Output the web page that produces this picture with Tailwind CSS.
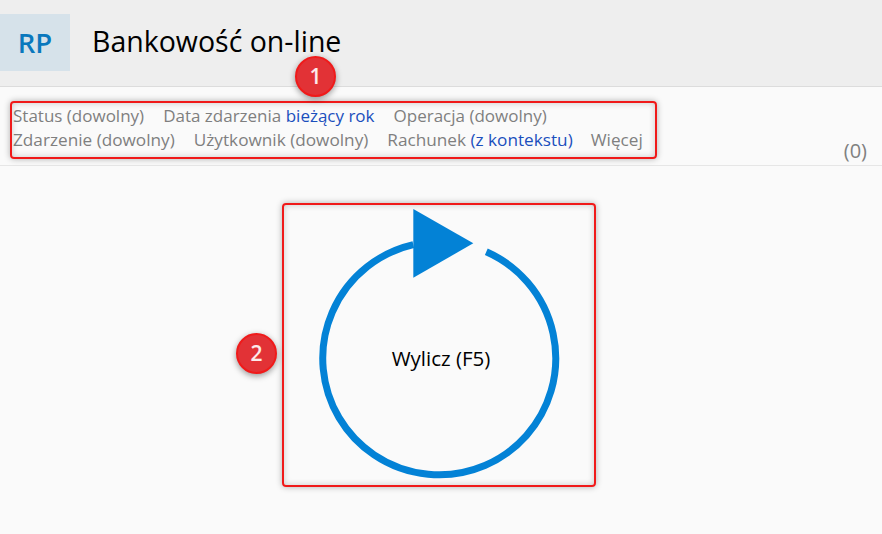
<!DOCTYPE html>
<html lang="pl">
<head>
<meta charset="utf-8">
<script src="https://cdn.jsdelivr.net/npm/@tailwindcss/browser@4"></script>
</head>
<body class="w-[882px] h-[534px] overflow-hidden bg-[#fafafa] font-['Open_Sans','Noto_Sans',sans-serif] relative">
  <header class="h-[87px] bg-[#eeeeee] border-b border-[#dcdcdc] pt-[14px] flex items-start">
    <div class="w-[70px] h-[57px] bg-[#d6e2ea] flex items-center justify-center text-[#0a78bd] text-[27.5px] font-semibold">RP</div>
    <h1 class="ml-[22px] h-[54px] flex items-center text-[28.5px] text-black">Bankowość on-line</h1>
  </header>
  <section class="h-[79px] border-b border-[#e6e6e6] relative pl-[13px] pt-[17px] leading-[24px] text-[#7f7f7f]">
    <div class="flex gap-[19px] text-[17px]">
      <span>Status (dowolny)</span>
      <span>Data zdarzenia <span class="text-[#1b4fbd]">bieżący rok</span></span>
      <span>Operacja (dowolny)</span>
    </div>
    <div class="flex gap-[19px] text-[17.2px]">
      <span>Zdarzenie (dowolny)</span>
      <span>Użytkownik (dowolny)</span>
      <span>Rachunek <span class="text-[#1b4fbd]">(z kontekstu)</span></span>
      <span class="-ml-[1px]">Więcej</span>
    </div>
    <span class="absolute right-[15px] bottom-[2px] text-[20px] text-[#808080]">(0)</span>
  </section>
  <main class="flex justify-center pr-[4px] pt-[38px]">
    <button class="relative w-[312px] h-[282px] flex items-center justify-center text-[20.5px] text-black">
      <svg class="absolute left-0 top-0" width="312" height="282" viewBox="283 204 312 282" fill="none">
        <path d="M486.3 251.7A116.5 116.5 0 1 1 413.3 244.7" stroke="#0382d6" stroke-width="7"/>
        <path d="M413.3 209L473.3 243.3L413.3 277.7Z" fill="#0382d6"/>
      </svg>
      <span class="relative mt-[26px] mr-[-4px]">Wylicz (F5)</span>
    </button>
  </main>
  <div class="absolute left-[10px] top-[101px] w-[647px] h-[58px] border-2 border-[#f01a1a] rounded-[4px] shadow-[0_0_6px_rgba(0,0,0,0.3),inset_0_0_6px_rgba(0,0,0,0.2)]"></div>
  <div class="absolute left-[282px] top-[203px] w-[314px] h-[284px] border-2 border-[#f01a1a] rounded-[4px] shadow-[0_0_6px_rgba(0,0,0,0.3),inset_0_0_6px_rgba(0,0,0,0.2)]"></div>
  <div class="absolute left-[295px] top-[56px] w-[41px] h-[41px] rounded-full bg-[#e23236] border-2 border-[#f01a1a] text-white/90 text-[21px] font-semibold flex items-center justify-center shadow-[0_2px_6px_rgba(0,0,0,0.4)]">1</div>
  <div class="absolute left-[236px] top-[333px] w-[41px] h-[41px] rounded-full bg-[#e23236] border-2 border-[#f01a1a] text-white/90 text-[21px] font-semibold flex items-center justify-center shadow-[0_2px_6px_rgba(0,0,0,0.4)]">2</div>
</body>
</html>
